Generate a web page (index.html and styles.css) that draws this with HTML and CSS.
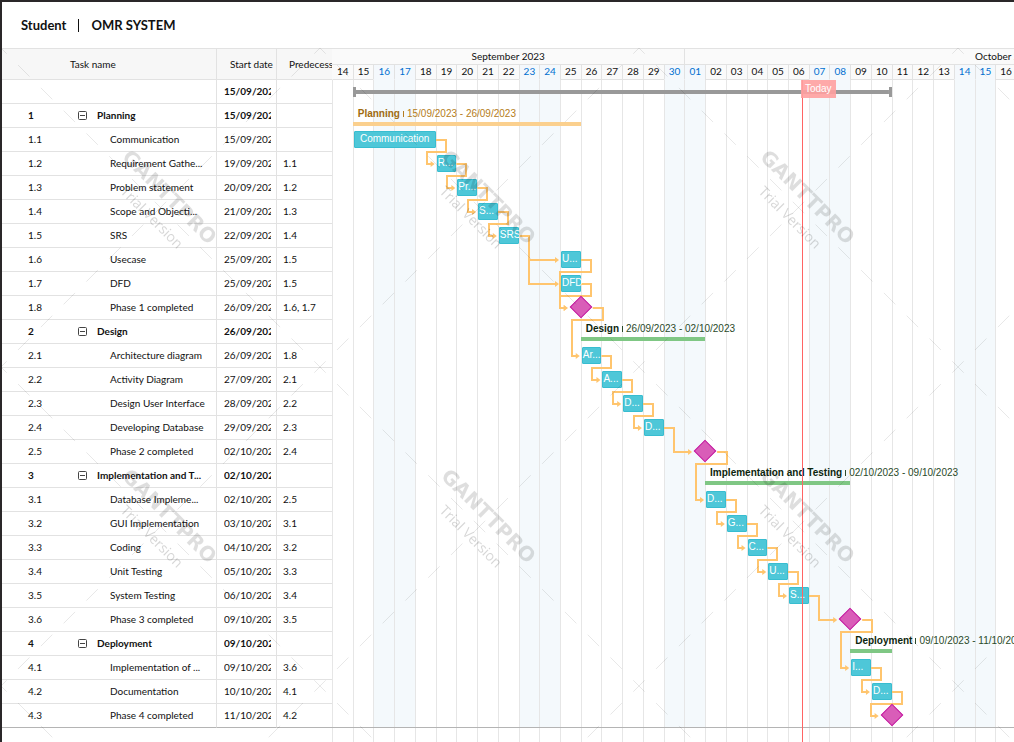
FILE: index.html
```html
<!DOCTYPE html>
<html lang="en">
<head>
  <meta charset="utf-8">
  <meta name="viewport" content="width=device-width, initial-scale=1">
  <title>OMR SYSTEM</title>
  <link rel="stylesheet" href="styles.css">
</head>
<body>
  <header class="page-header">
    <span class="owner">Student</span>
    <h1 class="project">OMR SYSTEM</h1>
  </header>

  <main class="gantt">
    <table class="tasks">
      <colgroup>
        <col class="col-number">
        <col class="col-name">
        <col class="col-date">
        <col class="col-pred">
      </colgroup>
      <thead>
        <tr>
          <th class="head-name" colspan="2" scope="col">Task name</th>
          <th class="head-date" scope="col">Start date</th>
          <th class="head-pred" scope="col"><span class="clip">Predecessors</span></th>
        </tr>
      </thead>
      <tbody id="task-rows"></tbody>
    </table>

    <section class="chart" aria-label="Timeline">
      <div class="timeline">
        <div class="months">
          <div class="month month-first"><span>September 2023</span></div>
          <div class="month month-second"><span class="month-wide">October 2023</span></div>
        </div>
        <div class="days" id="days"></div>
        <div class="canvas">
          <div class="columns" id="columns"></div>
          <svg class="links" id="links" viewBox="0 0 684 648" preserveAspectRatio="none" aria-hidden="true"></svg>
          <div class="bars" id="bars"></div>
        </div>
        <div class="columns-foot" id="columns-foot"></div>
        <div class="today" id="today"><span class="today-tag">Today</span></div>
      </div>
    </section>

    <svg class="watermark" aria-hidden="true">
      <defs>
        <pattern id="mark" width="319" height="319" patternUnits="userSpaceOnUse">
          <path class="mark-lines" pathLength="896" d="M159.5 159.5L319 319M159.5 159.5L0 0M159.5 159.5L319 0M159.5 159.5L0 319"/>
          <g transform="translate(159.5 159.5) rotate(45)" text-anchor="middle">
            <text class="mark-brand" x="-1" y="-7">GANTTPRO</text>
            <text class="mark-note" x="1" y="18">Trial Version</text>
          </g>
        </pattern>
      </defs>
      <rect width="100%" height="100%" fill="url(#mark)"/>
    </svg>
  </main>
  <script src="app.js"></script>
</body>
</html>
```

FILE: styles.css
```css
* {
  box-sizing: border-box;
}

body {
  margin: 0;
  min-height: 100vh;
  display: flex;
  flex-direction: column;
  border-top: 2px solid #2a2729;
  border-left: 2px solid #2a2729;
  background: #fff;
  color: #111;
  font-family: Lato, "Liberation Sans", sans-serif;
  font-size: 10px;
  overflow-x: hidden;
}

.page-header {
  height: 46px;
  padding-left: 19px;
  display: flex;
  align-items: center;
  font-size: 13px;
  font-weight: 700;
}

.owner {
  padding-right: 12px;
}

.project {
  margin: 0;
  padding-left: 12px;
  border-left: 1px solid #111;
  font-size: 13px;
  line-height: 13px;
}

.gantt {
  flex: 1;
  position: relative;
  display: grid;
  grid-template-columns: 330px minmax(0, 1fr);
  align-items: stretch;
  overflow: hidden;
}

/* Task table */

.tasks {
  align-self: start;
  width: 330px;
  table-layout: fixed;
  border-collapse: separate;
  border-spacing: 0;
}

.col-number { width: 76px; }
.col-name { width: 139px; }
.col-date { width: 60px; }
.col-pred { width: 55px; }

.tasks th {
  height: 32px;
  padding: 0;
  border-top: 1px solid #e2e2e2;
  border-bottom: 1px solid #e2e2e2;
  background: #f7f7f7;
  font-weight: 400;
  text-align: left;
  white-space: nowrap;
}

.tasks .head-name {
  padding-left: 68px;
  border-right: 1px solid #e2e2e2;
}

.tasks .head-date {
  padding-left: 13px;
  border-right: 1px solid #e2e2e2;
}

.tasks .head-pred {
  padding-left: 12px;
}

.clip {
  display: block;
  overflow: hidden;
}

.tasks td {
  height: 24px;
  padding: 0;
  border-bottom: 1px solid #e2e2e2;
  line-height: 23px;
  white-space: nowrap;
}

.tasks tr:last-child td {
  border-bottom-color: #b4b4b4;
}

.tasks .number {
  padding-left: 26px;
}

.tasks .name {
  padding-left: 32px;
  border-right: 1px solid #e2e2e2;
}

.tasks .date {
  padding: 0 5px 0 7px;
  border-right: 1px solid #e2e2e2;
}

.tasks .pred {
  padding-left: 6px;
}

.tasks .group td {
  font-weight: 700;
}

.tasks .group .name {
  padding-left: 0;
}

.group-name {
  display: flex;
  align-items: center;
  gap: 10px;
}

.toggle {
  display: flex;
  width: 9px;
  height: 9px;
  padding: 0;
  border: 0;
  background: none;
}

.toggle svg {
  width: 9px;
  height: 9px;
  fill: none;
  stroke: #444;
}

/* Timeline */

.chart {
  display: flex;
  overflow: hidden;
}

.timeline {
  flex: none;
  position: relative;
  width: calc(100% + 2px);
  display: flex;
  flex-direction: column;
}

.months,
.days,
.columns,
.columns-foot,
.bars {
  display: grid;
  grid-template-columns: repeat(33, minmax(0, 1fr));
}

.months {
  height: 17px;
  border-top: 1px solid #e2e2e2;
  border-bottom: 1px solid #e2e2e2;
  background: #fafafa;
}

.month {
  line-height: 15px;
  text-align: center;
  white-space: nowrap;
  overflow: hidden;
}

.month-first {
  grid-column: 1 / 18;
}

.month-second {
  grid-column: 18 / 34;
  border-left: 1px solid #e2e2e2;
}

.month-wide {
  display: block;
  width: 194%;
}

.day {
  height: 15px;
  border-left: 1px solid #e2e2e2;
  border-bottom: 1px solid #e2e2e2;
  background: #fafafa;
  line-height: 13px;
  text-align: center;
}

.day:first-child {
  border-left-color: #fafafa;
}

.day-off {
  border-bottom-color: #f4f8fc;
  background: #f4f8fc;
  color: #006fd0;
}

.canvas {
  position: relative;
  height: 648px;
  border-bottom: 1px solid #b4b4b4;
}

.columns,
.links {
  position: absolute;
  inset: 0;
  width: 100%;
  height: 648px;
}

.columns {
  height: 647px;
}

.columns-foot {
  flex: 1;
}

.column {
  border-left: 1px solid #e6e6e6;
}

.column-off {
  background: #f4f9fc;
}

.links path {
  vector-effect: non-scaling-stroke;
}

.link {
  fill: none;
  stroke: #ffc56e;
  stroke-width: 2;
}

.arrow {
  fill: #ffc56e;
}

.bars {
  position: relative;
  grid-template-rows: repeat(27, 24px);
  font-family: "Liberation Sans", Arial, sans-serif;
}

.total {
  align-self: center;
  height: 10px;
  border: solid #999;
  border-width: 0 3px;
  background: linear-gradient(#999, #999) center / 100% 4px no-repeat;
}

.task {
  height: 17px;
  margin: 3px 0 0 1px;
  border: 1px solid #38bdd0;
  border-radius: 1px;
  background: #4ec7d8;
  color: #fff;
  line-height: 14px;
  white-space: nowrap;
}

.task-wide {
  text-align: center;
}

.milestone {
  width: 16px;
  height: 16px;
  margin: 3px 0 0 -8px;
  border: 1px solid #c51fa2;
  background: #d95db8;
  transform: rotate(45deg);
}

.phase {
  height: 21px;
  border-bottom: 4px solid #7fc784;
  color: #2a4a2a;
}

.phase-label {
  display: flex;
  align-items: center;
  gap: 3px;
  padding: 1px 0 0 5px;
  line-height: 16px;
  white-space: nowrap;
}

.phase-title {
  color: #0d260d;
  font-weight: 700;
}

.phase-rule {
  flex: none;
  width: 1px;
  height: 6px;
  background: currentColor;
}

.phase-amber {
  height: 22px;
  border-bottom-color: #fbd08e;
  color: #b57d20;
}

.phase-amber .phase-label {
  padding-top: 2px;
}

.phase-amber .phase-title {
  color: #a06b10;
}

.today {
  position: absolute;
  top: 32px;
  bottom: 0;
  border-left: 1px solid #ff6464;
}

.today-tag {
  display: block;
  margin-left: -2px;
  padding: 0 4px;
  background: rgba(255, 160, 160, 0.9);
  color: #fff;
  font-family: "Liberation Sans", Arial, sans-serif;
  line-height: 18px;
}

.watermark {
  position: absolute;
  top: 0;
  left: -1px;
  width: calc(100% + 1px);
  height: 100%;
  pointer-events: none;
}

.mark-lines {
  fill: none;
  stroke: rgba(0, 0, 0, 0.09);
  stroke-width: 1;
  stroke-dasharray: 16 16;
  stroke-dashoffset: 8;
}

.mark-brand {
  fill: rgba(0, 0, 0, 0.13);
  font-family: "DejaVu Sans", sans-serif;
  font-size: 20px;
  font-weight: 700;
}

.mark-note {
  fill: rgba(0, 0, 0, 0.16);
  font-family: "Open Sans", sans-serif;
  font-size: 14px;
}
```

FILE: app.js
```js
// Day 0 is 14 September 2023; "start" and "end" are day offsets from it.
const DAY_COUNT = 33;
const DAY_WIDTH = 684 / DAY_COUNT;
const ROW_HEIGHT = 24;
const TODAY = 22.67;

const rows = [
  { kind: 'total', date: '15/09/2023', start: 1, end: 27 },
  { kind: 'phase', no: '1', name: 'Planning', date: '15/09/2023', start: 1, end: 12, range: '15/09/2023 - 26/09/2023', tone: 'amber' },
  { no: '1.1', name: 'Communication', date: '15/09/2023', start: 1, end: 5, label: 'Communication' },
  { no: '1.2', name: 'Requirement Gathe...', date: '19/09/2023', pred: '1.1', start: 5, label: 'R...' },
  { no: '1.3', name: 'Problem statement', date: '20/09/2023', pred: '1.2', start: 6, label: 'Pr...' },
  { no: '1.4', name: 'Scope and Objecti...', date: '21/09/2023', pred: '1.3', start: 7, label: 'S...' },
  { no: '1.5', name: 'SRS', date: '22/09/2023', pred: '1.4', start: 8, label: 'SRS' },
  { no: '1.6', name: 'Usecase', date: '25/09/2023', pred: '1.5', start: 11, label: 'U...' },
  { no: '1.7', name: 'DFD', date: '25/09/2023', pred: '1.5', start: 11, label: 'DFD' },
  { kind: 'milestone', no: '1.8', name: 'Phase 1 completed', date: '26/09/2023', pred: '1.6, 1.7', start: 12 },
  { kind: 'phase', no: '2', name: 'Design', date: '26/09/2023', start: 12, end: 18, range: '26/09/2023 - 02/10/2023' },
  { no: '2.1', name: 'Architecture diagram', date: '26/09/2023', pred: '1.8', start: 12, label: 'Ar...' },
  { no: '2.2', name: 'Activity Diagram', date: '27/09/2023', pred: '2.1', start: 13, label: 'A...' },
  { no: '2.3', name: 'Design User Interface', date: '28/09/2023', pred: '2.2', start: 14, label: 'D...' },
  { no: '2.4', name: 'Developing Database', date: '29/09/2023', pred: '2.3', start: 15, label: 'D...' },
  { kind: 'milestone', no: '2.5', name: 'Phase 2 completed', date: '02/10/2023', pred: '2.4', start: 18 },
  { kind: 'phase', no: '3', name: 'Implementation and T...', title: 'Implementation and Testing', date: '02/10/2023', start: 18, end: 25, range: '02/10/2023 - 09/10/2023' },
  { no: '3.1', name: 'Database Impleme...', date: '02/10/2023', pred: '2.5', start: 18, label: 'D...' },
  { no: '3.2', name: 'GUI Implementation', date: '03/10/2023', pred: '3.1', start: 19, label: 'G...' },
  { no: '3.3', name: 'Coding', date: '04/10/2023', pred: '3.2', start: 20, label: 'C...' },
  { no: '3.4', name: 'Unit Testing', date: '05/10/2023', pred: '3.3', start: 21, label: 'U...' },
  { no: '3.5', name: 'System Testing', date: '06/10/2023', pred: '3.4', start: 22, label: 'S...' },
  { kind: 'milestone', no: '3.6', name: 'Phase 3 completed', date: '09/10/2023', pred: '3.5', start: 25 },
  { kind: 'phase', no: '4', name: 'Deployment', date: '09/10/2023', start: 25, end: 27, range: '09/10/2023 - 11/10/2023' },
  { no: '4.1', name: 'Implementation of ...', date: '09/10/2023', pred: '3.6', start: 25, label: 'I...' },
  { no: '4.2', name: 'Documentation', date: '10/10/2023', pred: '4.1', start: 26, label: 'D...' },
  { kind: 'milestone', no: '4.3', name: 'Phase 4 completed', date: '11/10/2023', pred: '4.2', start: 27 }
];

const toggle = name =>
  `<button class="toggle" type="button" aria-label="Collapse ${name}"><svg viewBox="0 0 9 9"><rect x=".5" y=".5" width="8" height="8" rx="1"/><path d="M2 4.5h5"/></svg></button>`;

document.getElementById('task-rows').innerHTML = rows.map(r => {
  const group = r.kind === 'phase' || r.kind === 'total';
  const name = r.kind === 'phase'
    ? `<span class="group-name">${toggle(r.name)}<span>${r.name}</span></span>`
    : r.name || '';
  return `<tr${group ? ' class="group"' : ''}>
    <td class="number">${r.no || ''}</td>
    <td class="name">${name}</td>
    <td class="date"><span class="clip">${r.date}</span></td>
    <td class="pred">${r.pred || ''}</td>
  </tr>`;
}).join('');

const days = Array.from({ length: DAY_COUNT }, (_, i) => ({
  text: String(i < 17 ? i + 14 : i - 16).padStart(2, '0'),
  off: i % 7 === 2 || i % 7 === 3
}));

document.getElementById('days').innerHTML =
  days.map(d => `<div class="day${d.off ? ' day-off' : ''}">${d.text}</div>`).join('');
document.getElementById('columns').innerHTML =
  days.map(d => `<div class="column${d.off ? ' column-off' : ''}"></div>`).join('');
document.getElementById('columns-foot').innerHTML =
  days.map(() => '<div class="column"></div>').join('');
document.getElementById('today').style.left = `${TODAY / DAY_COUNT * 100}%`;

document.getElementById('bars').innerHTML = rows.map((r, i) => {
  const end = r.end || r.start + 1;
  const place = `style="grid-area: ${i + 1} / ${r.start + 1} / ${i + 2} / ${end + 1}"`;
  if (r.kind === 'total') return `<div class="total" ${place}></div>`;
  if (r.kind === 'milestone') return `<div class="milestone" ${place}></div>`;
  if (r.kind === 'phase') {
    return `<div class="phase${r.tone ? ' phase-' + r.tone : ''}" ${place}><div class="phase-label"><span class="phase-title">${r.title || r.name}</span><span class="phase-rule"></span><span>${r.range}</span></div></div>`;
  }
  return `<div class="task${r.end ? ' task-wide' : ''}" ${place}>${r.label}</div>`;
}).join('');

// Finish-to-start connectors between each task and its predecessors.
const paths = [];
rows.forEach((target, ti) => {
  if (!target.pred) return;
  target.pred.split(', ').forEach(no => {
    const si = rows.findIndex(r => r.no === no);
    const source = rows[si];
    const x1 = source.kind === 'milestone'
      ? source.start * DAY_WIDTH + 12
      : (source.end || source.start + 1) * DAY_WIDTH;
    const x2 = target.start * DAY_WIDTH - (target.kind === 'milestone' ? 12 : 0);
    const y1 = si * ROW_HEIGHT + 12;
    const y2 = ti * ROW_HEIGHT + 12;
    const out = Math.round(x1 + 10);
    const back = Math.round(x2 - 9);
    const route = x2 - x1 > 20
      ? `M${x1} ${y1}H${out}V${y2}H${x2 - 3}`
      : `M${x1} ${y1}H${out}V${y1 + 12}H${back}V${y2}H${x2 - 3}`;
    paths.push(`<path class="link" d="${route}"/><path class="arrow" d="M${x2 - 5} ${y2 - 3}L${x2 - 1} ${y2}L${x2 - 5} ${y2 + 3}Z"/>`);
  });
});
document.getElementById('links').innerHTML = paths.join('');
```
